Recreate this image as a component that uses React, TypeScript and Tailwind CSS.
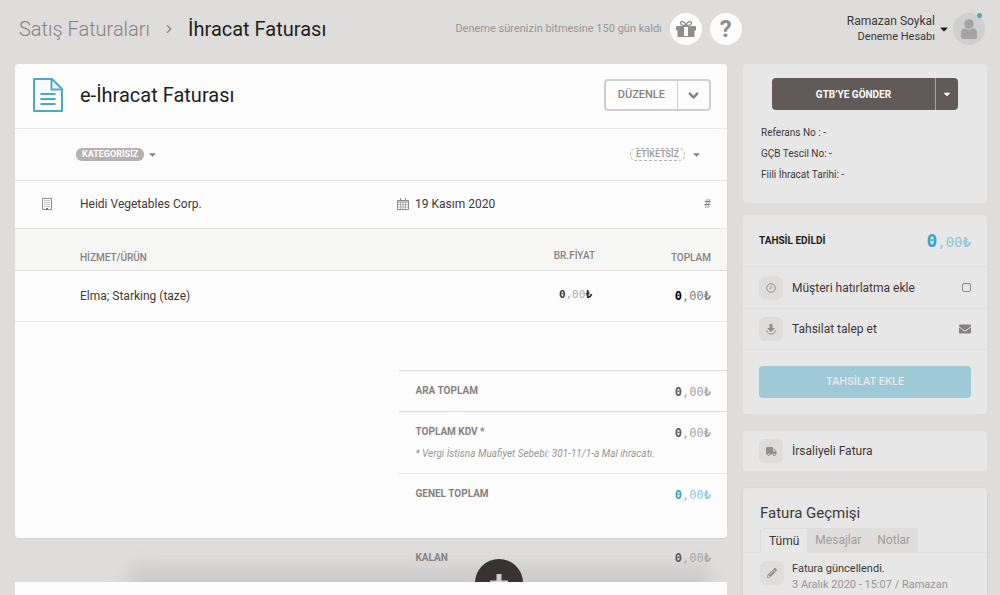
import type { ReactNode } from 'react'
import clsx from 'clsx'
import { ChevronDown, ChevronRight } from 'lucide-react'
import { FaCaretDown, FaEnvelope, FaPencilAlt, FaTruck } from 'react-icons/fa'

type MoneyProps = {
  whole?: string
  rest?: string
  lira?: string
  size?: string
  restSize?: string
}

function Money({ whole = 'text-[#5f5b5a]', rest = 'text-[#a9a7a6]', lira, size = 'text-xs', restSize = 'text-xs' }: MoneyProps) {
  return (
    <span className={clsx("font-['DejaVu_Sans_Mono',monospace] whitespace-nowrap", restSize)}>
      <span className={clsx('font-bold', size, whole)}>0</span>
      <span className={rest}>,00</span>
      <span className={clsx('font-bold', lira ?? rest)}>₺</span>
    </span>
  )
}

function IconTile({ children }: { children: ReactNode }) {
  return (
    <span className="flex size-6 shrink-0 items-center justify-center rounded-md bg-[#dedddc] text-[#918e8e]">
      {children}
    </span>
  )
}

function DocumentIcon() {
  return (
    <svg viewBox="0 0 30 34" className="h-[34px] w-[30px]" fill="none" stroke="#4ba8c8" strokeWidth="2">
      <path d="M1 1h18l10 10v22H1z" strokeLinejoin="round" />
      <path d="M18.500 1v10.500H29" />
      <path d="M7.500 16h15M7.500 21h15M7.500 26h15" />
    </svg>
  )
}

function GiftIcon() {
  return (
    <svg viewBox="0 0 20 18" className="h-[18px] w-5" fill="#918d8d">
      <path d="M1 6h7v4.500H0V7a1 1 0 0 1 1-1zM12 6h7a1 1 0 0 1 1 1v3.500h-8zM1.500 10.500H8V17H2.500a1 1 0 0 1-1-1zM12 10.500h6.500V16a1 1 0 0 1-1 1H12z" />
      <path d="M8 16h4v1H8zM8 6h4v1H8z" />
      <path d="M10 5.500C7 5.500 4.500 5 4.500 3S8.500.5 10 5.500zM10 5.500c3 0 5.500-.5 5.500-2.500S11.500.5 10 5.500z" fill="none" stroke="#918d8d" strokeWidth="1.300" />
    </svg>
  )
}

function UserIcon() {
  return (
    <svg viewBox="0 0 16 20" className="h-5 w-4" fill="#a5a3a3">
      <circle cx="8" cy="5" r="4.800" />
      <path d="M0 14.500C0 11 2 9.500 4 9.300c2.500 1.800 5.500 1.800 8 0 2 .2 4 1.700 4 5.200V18a2 2 0 0 1-2 2H2a2 2 0 0 1-2-2z" />
    </svg>
  )
}

function BuildingIcon() {
  return (
    <svg viewBox="0 0 10 12" className="h-3 w-2.5" fill="none" stroke="#8d8a8a">
      <path d="M.5.5h9v11h-9z" />
      <path d="M2.500 2.500h5M2.500 4.500h5M2.500 6.500h5M2.500 8.500h5" strokeDasharray="1 1" strokeWidth="1" />
      <path d="M4 10h2v2H4z" fill="#777" stroke="none" />
    </svg>
  )
}

function CalendarIcon() {
  return (
    <svg viewBox="0 0 12 12" className="size-3" fill="none" stroke="#8d8a8a">
      <path d="M.5 2.500h11v9H.5z" />
      <path d="M.5 4h11" />
      <path d="M3.500 0v3M8.500 0v3" />
      <path d="M.5 6.500h11M.5 9h11M3.500 4v7.500M6 4v7.500M8.500 4v7.500" strokeWidth=".6" />
    </svg>
  )
}

function ClockIcon() {
  return (
    <svg viewBox="0 0 10 10" className="size-2.5" fill="none" stroke="#918e8e">
      <circle cx="5" cy="5" r="4.300" />
      <path d="M5 2.500V5.500H3.500" strokeWidth=".8" />
    </svg>
  )
}

function CollectIcon() {
  return (
    <svg viewBox="0 0 10 11" className="h-[11px] w-2.5" fill="#918e8e">
      <path d="M3.500 0h3v4H9L5 8 1 4h2.500z" />
      <path d="M1.300 6C0 8 2 10 5 10s5-2 3.700-4" fill="none" stroke="#918e8e" />
    </svg>
  )
}

const label = 'text-[10px] font-bold text-[#858181]'
const darkButton = 'bg-[#625a59] text-white'

function Header() {
  return (
    <header className="flex h-16 items-center pr-[15px] pb-[6px] pl-[19px]">
      <nav className="flex items-center">
        <a href="#faturalar" className="text-xl font-light text-[#858281]">Satış Faturaları</a>
        <ChevronRight size={14} strokeWidth={2} className="mx-3 text-[#858281]" />
        <h1 className="text-xl text-[#221d1d]">İhracat Faturası</h1>
      </nav>

      <div className="ml-auto flex items-center">
        <p className="text-[11px] text-[#989594]">Deneme sürenizin bitmesine 150 gün kaldı</p>
        <button type="button" aria-label="Hediye" className="ml-2 flex size-8 items-center justify-center rounded-full bg-[#fdfdfd]">
          <GiftIcon />
        </button>
        <button type="button" aria-label="Yardım" className="ml-2 flex size-8 items-center justify-center rounded-full bg-[#fdfdfd] text-2xl font-bold text-[#918d8d]">
          ?
        </button>
      </div>

      <button type="button" className="ml-[105px] flex items-center">
        <span className="text-right text-[#3d3838]">
          <span className="block text-xs leading-4">Ramazan Soykal</span>
          <span className="block text-[11px] leading-4">Deneme Hesabı</span>
        </span>
        <FaCaretDown size={12} className="mr-[3px] ml-[3px] text-[#221d1d]" />
        <span className="relative flex size-8 items-center justify-center rounded-full bg-[#d0cfcf]">
          <UserIcon />
          <span className="absolute top-0 right-[3px] size-[5px] rounded-full bg-[#4ba8c8]" />
        </span>
      </button>
    </header>
  )
}

function InvoiceCard() {
  return (
    <section className="rounded bg-[#fdfdfd] shadow-xs">
      <div className="flex h-[65px] items-center border-b border-[#e9e9e8] pr-4 pb-0.5 pl-[18px]">
        <DocumentIcon />
        <h2 className="ml-[17px] text-xl text-[#221d1d]">e-İhracat Faturası</h2>
        <div className="ml-auto flex h-8 rounded border-2 border-[#d0cecd] text-[#858181]">
          <button type="button" className="px-3 text-[11px] font-medium">DÜZENLE</button>
          <button type="button" aria-label="Diğer işlemler" className="flex w-8 items-center justify-center border-l border-[#d0cecd]">
            <ChevronDown size={15} strokeWidth={4} />
          </button>
        </div>
      </div>

      <div className="flex h-[52px] items-center justify-between border-b border-[#e4e4e3] pr-[25px] pl-[61px]">
        <button type="button" className="flex items-center gap-[3px] text-[#858181]">
          <span className="rounded-md bg-[#b5b1b0] px-1.5 text-[9px] leading-[13px] font-bold text-white">KATEGORİSİZ</span>
          <FaCaretDown size={11} />
        </button>
        <button type="button" className="flex items-center gap-1.5 text-[#858181]">
          <span className="rounded-md border border-dashed border-[#b5b1b0] px-[5px] text-[9px] leading-[11px] font-medium text-[#9c9998]">ETİKETSİZ</span>
          <FaCaretDown size={11} />
        </button>
      </div>

      <div className="flex h-12 items-center border-b border-[#e4e4e3] pr-4 pb-0.5 pl-[27px] text-xs text-[#3d3838]">
        <div className="flex w-[355px] items-center gap-7">
          <BuildingIcon />
          <span>Heidi Vegetables Corp.</span>
        </div>
        <div className="flex items-center gap-1.5">
          <CalendarIcon />
          <span>19 Kasım 2020</span>
        </div>
        <span className="ml-auto text-[#858181]">#</span>
      </div>

      <table className="w-full border-collapse">
        <thead className="bg-[#f6f6f5]">
          <tr className="h-[41px] border-b border-[#e0e0df] align-bottom text-[10px] text-[#858281]">
            <th className="pb-[5px] pl-[65px] text-left font-medium">HİZMET/ÜRÜN</th>
            <th className="w-[130px] pb-[7px] text-right font-medium">BR.FİYAT</th>
            <th className="w-[132px] pr-4 pb-[5px] text-right font-medium">TOPLAM</th>
          </tr>
        </thead>
        <tbody>
          <tr className="h-[51px] border-b border-[#e7e7e6] text-xs text-[#3d3838]">
            <td className="pl-[65px]">Elma; Starking (taze)</td>
            <td className="pr-[3px] pb-0.5 text-right">
              <Money lira="text-[#221d1d]" whole="text-[#3d3838]" size="text-[11px]" restSize="text-[11px]" />
            </td>
            <td className="pr-4 text-right"><Money whole="text-black" rest="text-[#858181]" /></td>
          </tr>
        </tbody>
      </table>

      <dl className="mt-12 ml-auto w-[46%] pb-6">
        <div className="flex h-[41px] items-center justify-between border-t border-[#dededd] pr-4 pl-4">
          <dt className={label}>ARA TOPLAM</dt>
          <dd><Money /></dd>
        </div>
        <div className="h-[62px] border-t border-[#dededd] pr-4 pl-4">
          <div className="flex h-10 items-center justify-between">
            <dt className={label}>TOPLAM KDV *</dt>
            <dd><Money /></dd>
          </div>
          <dd className="text-[10px] leading-[3px] text-[#989594] italic">* Vergi İstisna Muafiyet Sebebi: 301-11/1-a Mal ihracatı.</dd>
        </div>
        <div className="flex h-[41px] items-center justify-between border-t border-[#e9e9e8] pr-4 pl-4">
          <dt className={label}>GENEL TOPLAM</dt>
          <dd><Money whole="text-[#3ba3c8]" rest="text-[#8fc8dc]" /></dd>
        </div>
      </dl>
    </section>
  )
}

function RemainingRow() {
  return (
    <div className="relative h-[44px] shrink-0 overflow-hidden">
      <div className="absolute right-4 -bottom-6 left-28 h-10 rounded-xl bg-[#c9c7c8] opacity-80 blur-sm" />
      <button type="button" aria-label="Ekle" className="absolute top-[21px] left-[68%] size-12 -translate-x-1/2 rounded-full bg-[#393233]">
        <svg viewBox="0 0 48 48" className="size-12" stroke="#d0cecd" strokeWidth="5">
          <path d="M24 15v18M15 24h18" />
        </svg>
      </button>
      <div className="relative ml-auto flex h-10 w-[46%] items-center justify-between pr-4 pl-4">
        <span className={label}>KALAN</span>
        <Money rest="text-[#aaa8a7]" />
      </div>
    </div>
  )
}

function Sidebar() {
  return (
    <aside className="flex w-[244px] shrink-0 flex-col text-[#3d3838]">
      <section className="rounded bg-[#e7e7e7] px-[18px] pt-3.5 pb-[18px]">
        <div className="mx-[11px] flex h-8 overflow-hidden rounded">
          <button type="button" className={clsx('flex-1 text-[10px] font-bold', darkButton)}>GTB’YE GÖNDER</button>
          <button type="button" aria-label="Gönderim seçenekleri" className={clsx('flex w-[23px] items-center justify-center border-l border-[#aaa5a4]', darkButton)}>
            <FaCaretDown size={10} />
          </button>
        </div>
        <div className="mt-3 text-[10px] leading-[21px]">
          <p>Referans No : -</p>
          <p>GÇB Tescil No: -</p>
          <p>Fiili İhracat Tarihi: -</p>
        </div>
      </section>

      <section className="mt-3 rounded bg-[#e7e7e7]">
        <div className="flex h-[51px] items-center justify-between px-4">
          <h3 className="text-[10px] font-bold text-[#221d1d]">TAHSİL EDİLDİ</h3>
          <Money whole="text-[#3ba3c8]" rest="text-[#8fc8dc]" size="text-lg" restSize="text-sm" />
        </div>
        <label className="flex h-[42px] items-center border-t border-[#dfdfde] px-4 text-xs">
          <IconTile><ClockIcon /></IconTile>
          <span className="ml-[9px]">Müşteri hatırlatma ekle</span>
          <input type="checkbox" className="ml-auto size-[9px] appearance-none rounded-xs border border-[#8d8a8a]" />
        </label>
        <a href="#talep" className="flex h-[42px] items-center border-y border-[#dfdfde] px-4 text-xs">
          <IconTile><CollectIcon /></IconTile>
          <span className="ml-[9px]">Tahsilat talep et</span>
          <FaEnvelope size={12} className="ml-auto text-[#858181]" />
        </a>
        <div className="px-4 py-4">
          <button type="button" className="h-8 w-full rounded bg-[#a0c9d8] text-[11px] font-medium text-[#e8e8e8]">TAHSİLAT EKLE</button>
        </div>
      </section>

      <section className="mt-[17px] rounded bg-[#e7e7e7]">
        <a href="#irsaliye" className="flex h-10 items-center px-4 text-xs">
          <IconTile><FaTruck size={11} /></IconTile>
          <span className="ml-[9px]">İrsaliyeli Fatura</span>
        </a>
      </section>

      <section className="mt-[17px] flex-1 rounded-t bg-[#e7e7e7] pt-[13px] shadow-sm">
        <h3 className="px-[17px] text-[15px] leading-6">Fatura Geçmişi</h3>
        <div role="tablist" className="mt-[3px] flex border-b border-[#dedddc] px-[17px] text-xs">
          <button type="button" role="tab" aria-selected="true" className="-mb-px h-[25px] rounded-tl border-t border-l border-[#dedddc] bg-[#e7e7e7] px-2">Tümü</button>
          <button type="button" role="tab" aria-selected="false" className="bg-[#dedddc] px-2 text-[#a09e9d]">Mesajlar</button>
          <button type="button" role="tab" aria-selected="false" className="rounded-tr bg-[#dedddc] px-2 text-[#a09e9d]">Notlar</button>
        </div>
        <div className="flex gap-2 px-[17px] pt-2">
          <IconTile><FaPencilAlt size={10} /></IconTile>
          <div className="text-[11px] leading-4">
            <p>Fatura güncellendi.</p>
            <p className="text-[#989594]">3 Aralık 2020 - 15:07 / Ramazan</p>
          </div>
        </div>
      </section>
    </aside>
  )
}

export default function App() {
  return (
    <div className="flex h-screen flex-col overflow-hidden bg-[#dedddb] font-[Roboto,sans-serif]">
      <Header />
      <div className="flex min-h-0 flex-1 gap-4 pr-[13px] pl-[15px]">
        <main className="flex min-w-0 flex-1 flex-col">
          <InvoiceCard />
          <RemainingRow />
          <div className="flex-1 bg-[#fdfdfd]" />
        </main>
        <Sidebar />
      </div>
    </div>
  )
}
